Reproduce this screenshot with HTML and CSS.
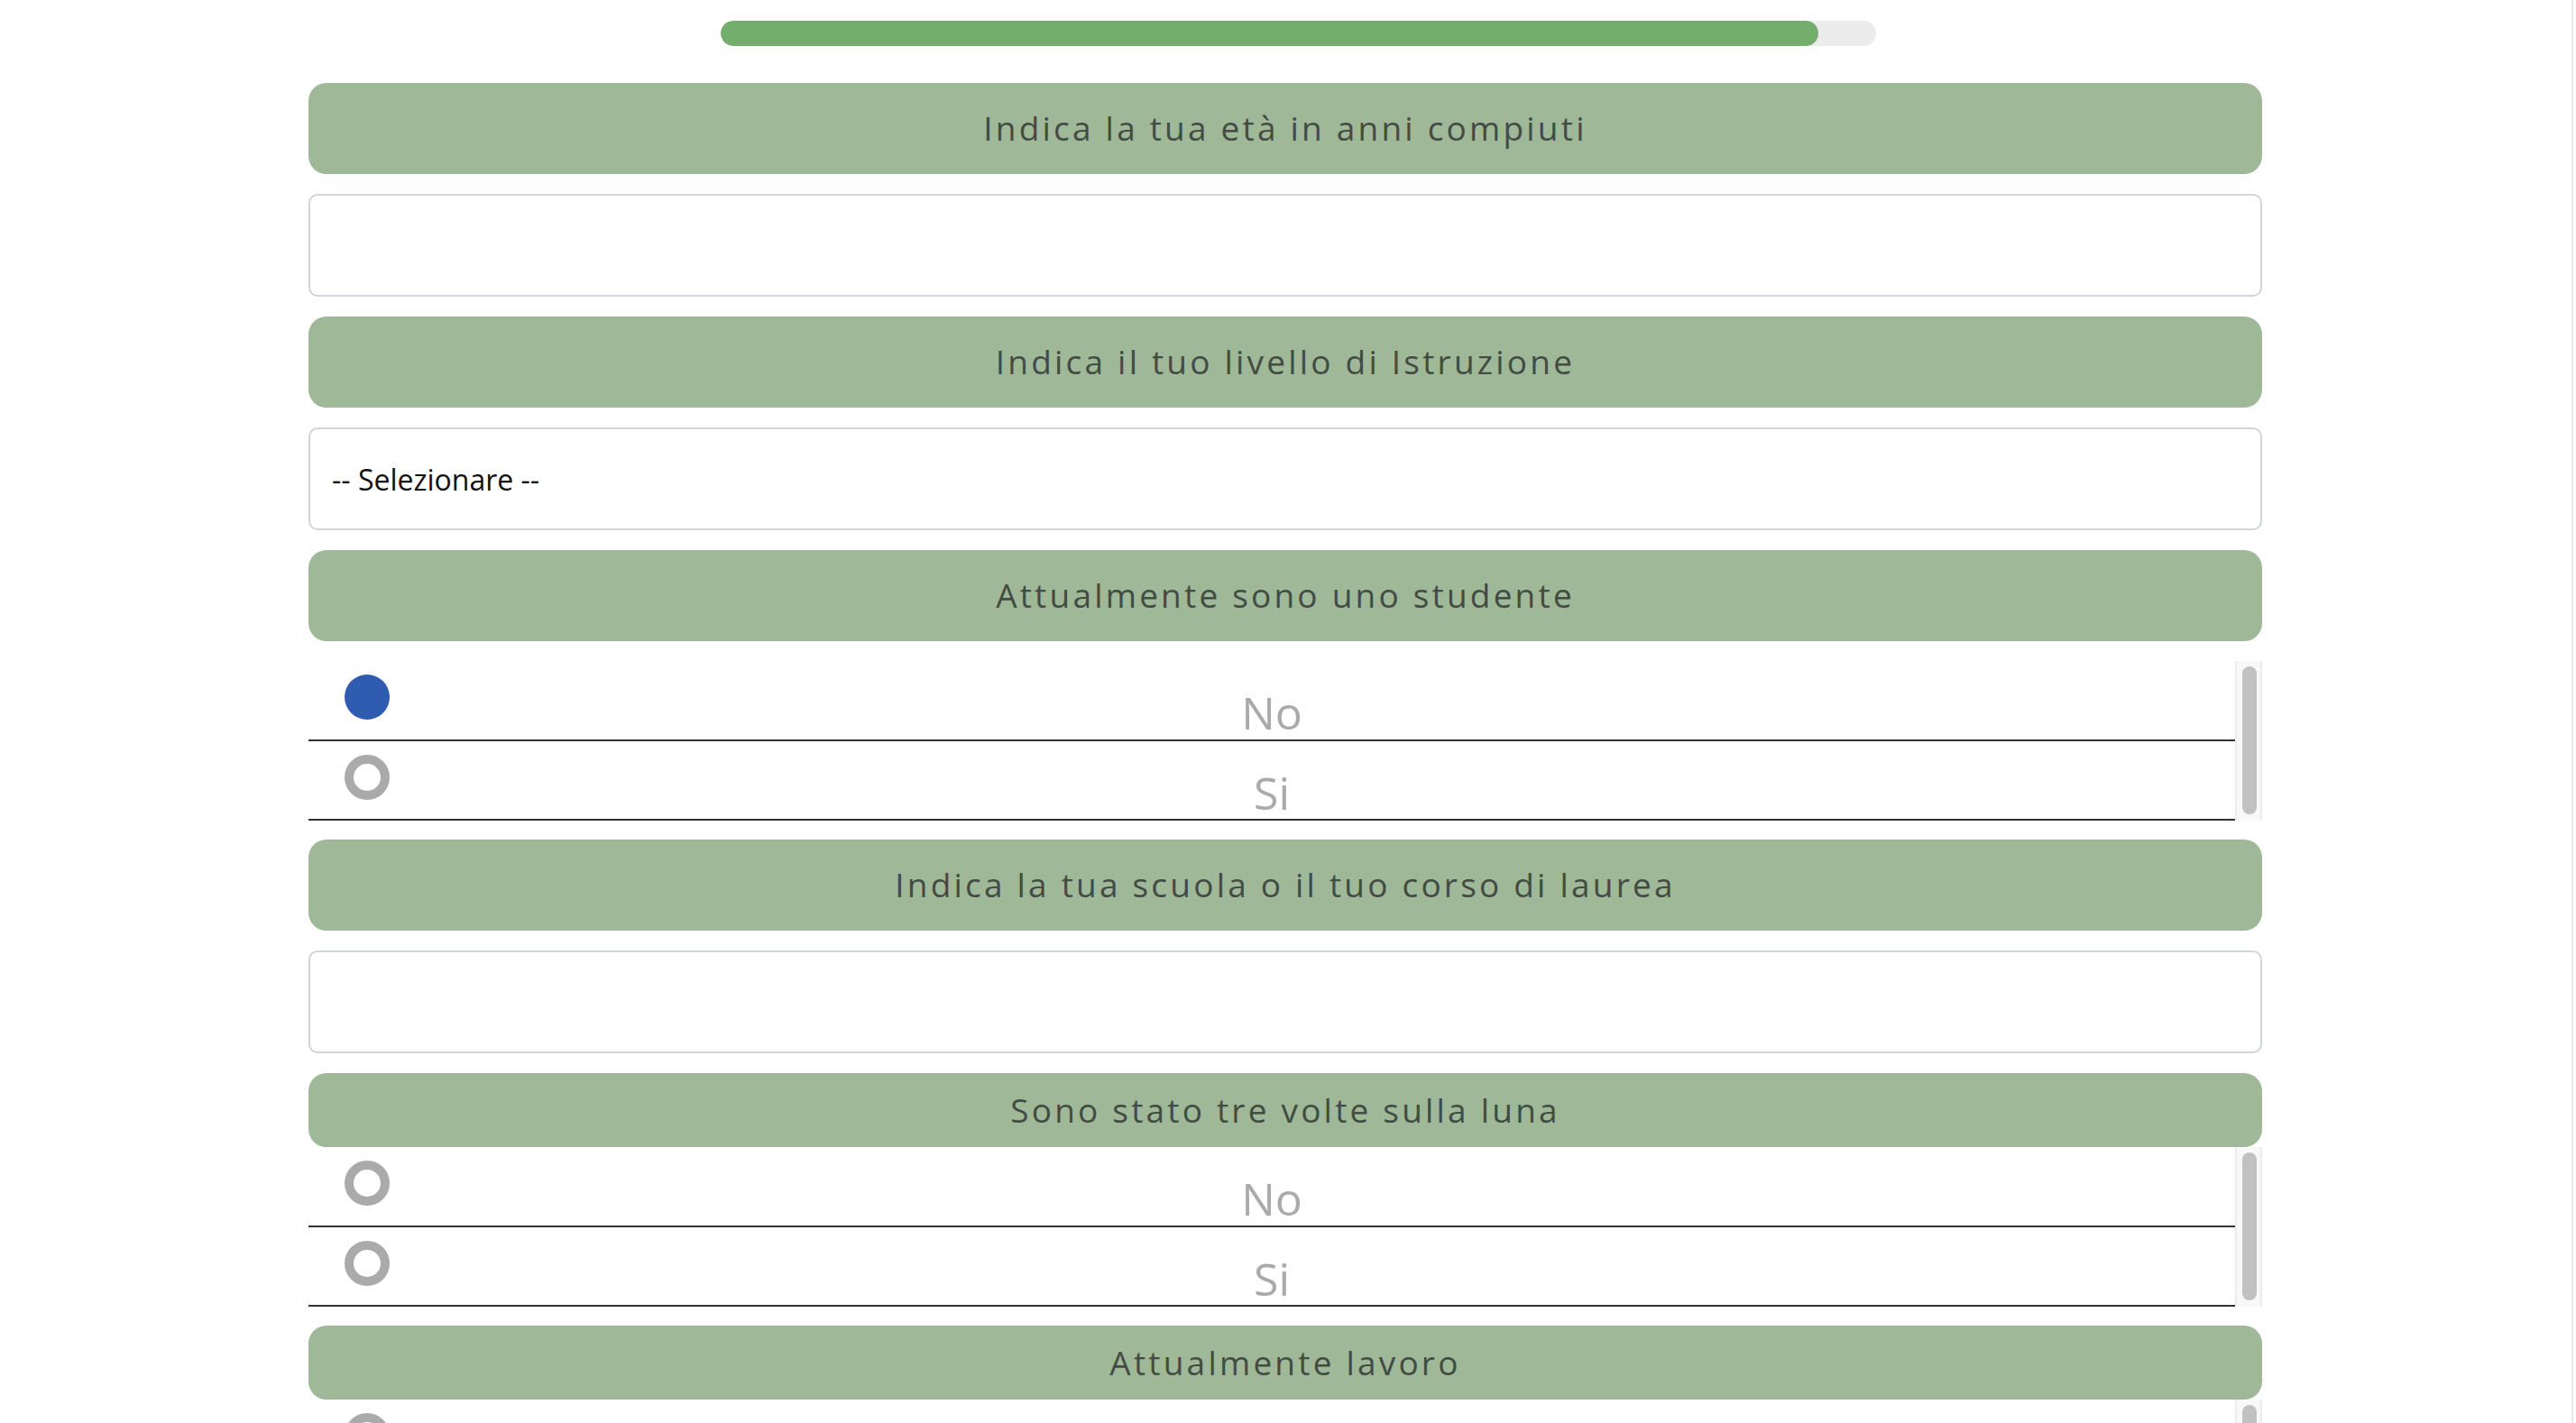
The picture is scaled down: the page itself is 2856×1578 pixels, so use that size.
FILE: index.html
```html
<!DOCTYPE html>
<html lang="it">
<head>
<meta charset="utf-8">
<title>Questionario</title>
<link rel="stylesheet" href="styles.css">
</head>
<body>
<div class="page">
  <main class="survey">
    <div class="progress"><div class="progress__fill" style="width:95%"></div></div>

    <div class="q-title">Indica la tua età in anni compiuti</div>
    <div class="field"></div>

    <div class="q-title">Indica il tuo livello di Istruzione</div>
    <div class="field field--select">-- Selezionare --</div>

    <div class="q-title">Attualmente sono uno studente</div>
    <div class="choices">
      <div class="choices__list">
        <div class="choice"><span class="radio radio--on"></span><span class="choice__label">No</span></div>
        <div class="choice"><span class="radio"></span><span class="choice__label">Si</span></div>
      </div>
      <div class="vscroll"><div class="vscroll__thumb"></div></div>
    </div>

    <div class="q-title">Indica la tua scuola o il tuo corso di laurea</div>
    <div class="field"></div>

    <div class="q-title q-title--compact">Sono stato tre volte sulla luna</div>
    <div class="choices">
      <div class="choices__list">
        <div class="choice"><span class="radio"></span><span class="choice__label">No</span></div>
        <div class="choice"><span class="radio"></span><span class="choice__label">Si</span></div>
      </div>
      <div class="vscroll"><div class="vscroll__thumb"></div></div>
    </div>

    <div class="q-title q-title--compact">Attualmente lavoro</div>
    <div class="choices">
      <div class="choices__list">
        <div class="choice"><span class="radio"></span><span class="choice__label">No</span></div>
        <div class="choice"><span class="radio"></span><span class="choice__label">Si</span></div>
      </div>
      <div class="vscroll"><div class="vscroll__thumb"></div></div>
    </div>
  </main>
  <div class="page-scrollbar"></div>
</div>
</body>
</html>
```

FILE: styles.css
```css
html, body {
  margin: 0;
  padding: 0;
  background: #ffffff;
}

body {
  font-family: "Open Sans", "Liberation Sans", sans-serif;
  color: #212529;
}

.page {
  display: flex;
  min-height: 100vh;
}

.survey {
  flex: 1;
  display: flex;
  flex-direction: column;
  align-items: stretch;
  padding: 0 343px 0 342px;
}

.page-scrollbar {
  width: 3px;
  border-left: 2px solid #e9e9e9;
  background: #ffffff;
}

.progress {
  margin: 23px 0 41px 457px;
  width: 1281px;
  height: 28px;
  border-radius: 14px;
  background: #ececec;
  overflow: hidden;
}

.progress__fill {
  height: 100%;
  background: #74ae6c;
  border-radius: 14px;
}

.q-title {
  height: 101px;
  box-sizing: border-box;
  padding-bottom: 2px;
  display: flex;
  align-items: center;
  justify-content: center;
  background: #9eb898;
  border-radius: 20px;
  color: #434c43;
  font-size: 37px;
  letter-spacing: 3.2px;
  margin-bottom: 22px;
}

.q-title--compact {
  height: 82px;
  margin-bottom: 0;
}

.field {
  height: 114px;
  box-sizing: border-box;
  border: 2px solid #d1d5db;
  border-radius: 10px;
  background: #ffffff;
  margin-bottom: 22px;
}

.field--select {
  display: flex;
  align-items: center;
  padding-left: 24px;
  font-size: 32px;
  color: #111111;
}

.choices {
  display: flex;
  height: 177px;
  margin-bottom: 21px;
}

.choices__list {
  flex: 1;
  display: flex;
  flex-direction: column;
}

.choice {
  height: 88.5px;
  box-sizing: border-box;
  border-bottom: 2px solid #333333;
  display: grid;
  grid-template-columns: 1fr auto 1fr;
  align-items: start;
}

.radio {
  justify-self: start;
  margin: 15px 0 0 40px;
  width: 50px;
  height: 50px;
  box-sizing: border-box;
  border-radius: 50%;
  border: 10px solid #aaaaaa;
  background: #ffffff;
}

.radio--on {
  border: none;
  background: #2f5bb0;
}

.choice__label {
  margin-top: 32px;
  font-size: 50px;
  line-height: 50px;
  color: #aaaaaa;
}

.vscroll {
  width: 30px;
  box-sizing: border-box;
  background: #f8f8f8;
  border-left: 2px solid #ececec;
  border-right: 2px solid #ececec;
  padding: 6px 4px 7px 6px;
  display: flex;
}

.vscroll__thumb {
  flex: 1;
  background: #c1c1c1;
  border-radius: 8px;
}
```
